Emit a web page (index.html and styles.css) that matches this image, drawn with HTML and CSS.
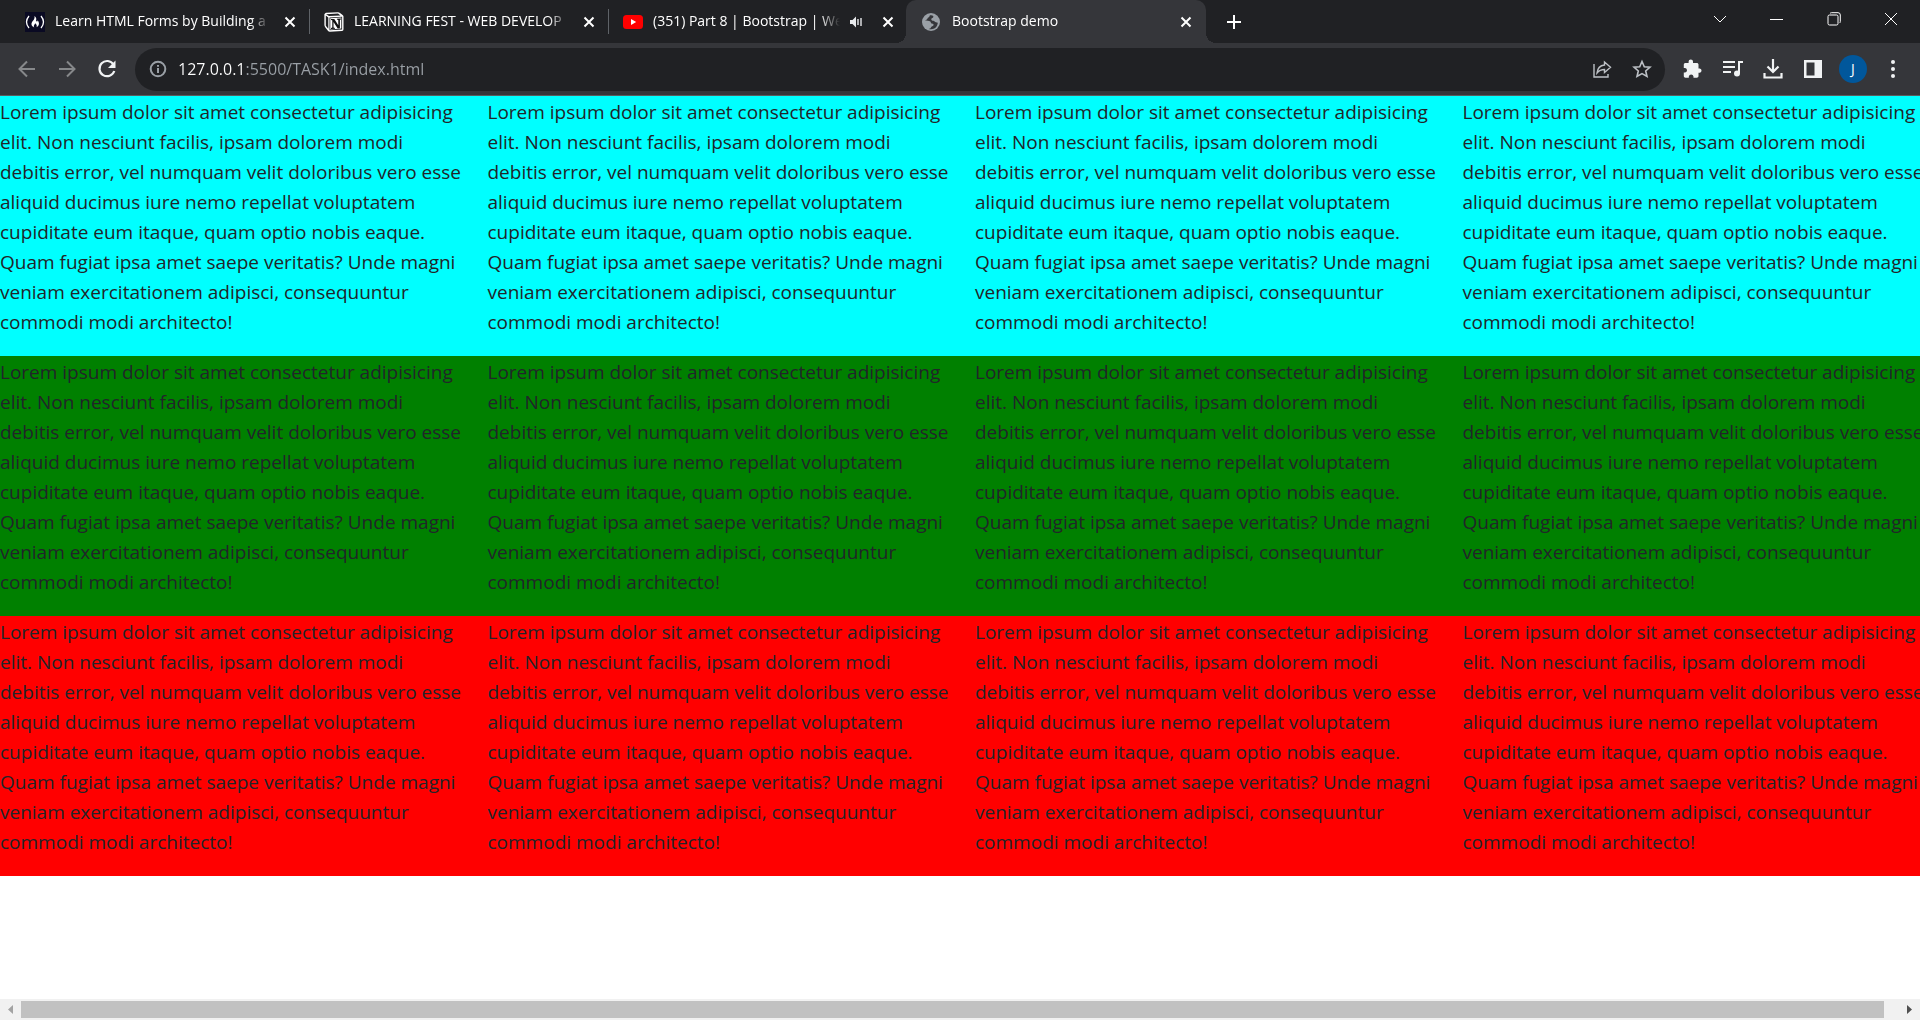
FILE: index.html
```
<!DOCTYPE html>
<html lang="en">
<head>
<meta charset="utf-8">
<title>Bootstrap demo</title>
<link rel="stylesheet" href="styles.css">
</head>
<body>
<header class="browser">
  <div class="tabstrip">
    <div class="tab divided">
      <svg class="favicon" viewBox="0 0 20 20"><rect width="20" height="20" fill="#0a0a23"/><path d="M4 4Q-1 10 4 16M16 4Q21 10 16 16" fill="none" stroke="#fff" stroke-width="1.3"/><path d="M9.500 4c3.500 3 .5 4.500 2.200 5.500.7.300 1-.5.800-1.200 2 2.200 2.200 5.200-.9 7 .6-2-.2-2.900-1.500-4-.2 1.700-2.200 2.200-.8 4.100-3.800-1.400-3.200-4.700-1.300-6.600C9.300 7.400 9.800 6 9.500 4z" fill="#fff"/></svg>
      <span class="label">Learn HTML Forms by Building a</span>
      <button class="close" aria-label="Close tab"><svg viewBox="0 0 12 12"><path d="M1.500 1.500l9 9M10.500 1.500l-9 9"/></svg></button>
    </div>
    <div class="tab divided">
      <svg class="favicon" viewBox="0 0 20 20"><path d="M1.200 1.600Q1 .7 2.200.7L14 .2q1 0 2 .7l2.600 2q.9.700.9 1.600v12.800q0 1.500-1.500 1.600L6 19.700q-1.200.1-1.900-.8L1.200 15.200Q.4 14 .4 13V2z" fill="#fff"/><path d="M2 2.300l12-.7 2.500 1.800L5 4.100zM1.800 3.500L4.300 5.500V16.800L1.800 13.800z" fill="#202124"/><path d="M5.500 5.500l12.600-.7v12.600l-12.600.9z" fill="#202124"/><path d="M6.300 6.200l11-.6v11l-11 .8z" fill="#fff"/><path d="M7 7h3.300l4 6.200V8l-1.400-.4V6.700l4-.2v.9l-1 .4v8.500l-2.200.2-4.200-6.600v5.500l1.500.5v.8l-4 .2v-.8l1.300-.6V8.200L7 8z" fill="#111"/></svg>
      <span class="label">LEARNING FEST - WEB DEVELOP</span>
      <button class="close" aria-label="Close tab"><svg viewBox="0 0 12 12"><path d="M1.500 1.500l9 9M10.500 1.500l-9 9"/></svg></button>
    </div>
    <div class="tab">
      <svg class="favicon" viewBox="0 0 20 20"><rect y="3" width="20" height="14" rx="3.500" fill="#f00"/><path d="M8 7l5.200 3L8 13z" fill="#fff"/></svg>
      <span class="label">(351) Part 8 | Bootstrap | Web</span>
      <button class="audio" aria-label="Mute tab"><svg viewBox="0 0 14 14"><path d="M1 5h2.500L7 1.500v11L3.500 9H1z" fill="#e8eaed"/><path d="M9 4v6M12 3v8" stroke="#e8eaed" stroke-width="1.400"/></svg></button>
      <button class="close" aria-label="Close tab"><svg viewBox="0 0 12 12"><path d="M1.500 1.500l9 9M10.500 1.500l-9 9"/></svg></button>
    </div>
    <div class="tab active">
      <svg class="favicon" viewBox="0 0 20 20"><circle cx="9" cy="10" r="9" fill="#9aa0a6"/><path transform="translate(0 -1)" d="M8 4.200c-1 1-.2 2-1.800 2.300-1 .3-.3 1.600-1.400 2L3 9.600c1.700.1 4 .1 5.300.8.900.5.200 2 1.400 2.200 1.500.2 2.300.7 1.700 2-.5 1-2 .6-2.500 1.800-.3 1-1.200 1.400-2.100 1.500 4.800 1.200 8.700-1.700 9-6.200-1.300-.4-2.600-.1-3.200-1.200-.5-1-2.100-.2-2.900-1.200-.8-.8-.3-2 .6-2.300.9-.2 1.200-.8 1-1.700-.2-.8-1.800-1.100-3.300-1.100z" fill="#35363a"/></svg>
      <span class="label">Bootstrap demo</span>
      <button class="close" aria-label="Close tab"><svg viewBox="0 0 12 12"><path d="M1.500 1.500l9 9M10.500 1.500l-9 9"/></svg></button>
    </div>
    <button class="new-tab" aria-label="New tab"><svg viewBox="0 0 16 16"><path d="M8 1v14M1 8h14"/></svg></button>
    <div class="window-controls">
      <button aria-label="Search tabs"><svg viewBox="0 0 14 14"><path d="M1 4l6 6 6-6"/></svg></button>
      <button aria-label="Minimize"><svg viewBox="0 0 14 14"><path d="M0 7.500h13"/></svg></button>
      <button aria-label="Restore"><svg viewBox="0 0 14 14"><rect x="1" y="3" width="10" height="10" rx="1.500"/><path d="M3 1.500q.6-.8 1.500-.8H11q2.300 0 2.300 2.300v6.500q0 1-.8 1.500"/></svg></button>
      <button aria-label="Close"><svg viewBox="0 0 14 14"><path d="M1 1l12 12M13 1L1 13"/></svg></button>
    </div>
  </div>
  <div class="toolbar">
    <button class="tool muted" aria-label="Back"><svg viewBox="0 0 20 20"><path d="M18 10H3M10 2.500L2.500 10l7.500 7.500"/></svg></button>
    <button class="tool muted" aria-label="Forward"><svg viewBox="0 0 20 20"><path d="M2 10h15M10 2.500l7.500 7.500-7.500 7.500"/></svg></button>
    <button class="tool" aria-label="Reload"><svg viewBox="0 0 20 20"><path d="M16.500 5.500A7.600 7.600 0 1 0 17.300 12" stroke-width="2.200"/><path d="M18.500 1.500v7.500H11z" class="solid"/></svg></button>
    <div class="omnibox">
      <svg class="info" viewBox="0 0 18 18"><circle cx="9" cy="9" r="7.300"/><path d="M9 8v5M9 5v1.700"/></svg>
      <input class="url" type="text" aria-label="Address" value="127.0.0.1:5500/TASK1/index.html">
      <button class="tool soft" aria-label="Share"><svg viewBox="0 0 20 20"><path d="M2 5v13h14v-3M5 14c.5-5 3-7.500 7.500-8V3l6 5.300-6 5.200v-3C9 10.500 7 11.500 5 14z" stroke-width="1.400"/></svg></button>
      <button class="tool soft" aria-label="Bookmark"><svg viewBox="0 0 20 20"><path d="M10 2.500l2.300 5.200 5.700.5-4.300 3.800 1.300 5.500-5-2.900-5 2.900L6.300 12 2 8.200l5.700-.5z" stroke-width="1.600"/></svg></button>
    </div>
    <button class="tool" aria-label="Extensions"><svg viewBox="0 0 20 20"><path class="solid" d="M16.800 9.400h-1.300V5.600c0-1-.8-1.700-1.700-1.700H10V2.600a2.200 2.200 0 0 0-4.400 0v1.300H2.500C1.600 3.900.8 4.600.8 5.600v3.300h1.300a2.400 2.400 0 0 1 0 4.700H.8V17c0 1 .8 1.700 1.700 1.700h3.300v-1.300a2.400 2.400 0 0 1 4.700 0v1.300h3.300c1 0 1.700-.8 1.700-1.700v-3.300h1.300a2.200 2.200 0 0 0 0-4.300z"/></svg></button>
    <button class="tool" aria-label="Media"><svg viewBox="0 0 20 20"><path d="M0 3h12M0 8h12M0 13h8M20 3h-4v11" stroke-width="2"/><circle class="solid" cx="14" cy="14.500" r="3"/></svg></button>
    <button class="tool" aria-label="Downloads"><svg viewBox="0 0 20 20"><path d="M10 0v12M4.500 7.500L10 13l5.500-5.500M1.500 14v4.500h17V14" stroke-width="2.200"/></svg></button>
    <button class="tool" aria-label="Side panel"><svg viewBox="0 0 20 20"><path class="solid" fill-rule="evenodd" d="M1 1h18v18H1zM3.500 3.500v13h8v-13z"/></svg></button>
    <button class="tool" aria-label="Profile"><span class="avatar">J</span></button>
    <button class="tool" aria-label="Menu"><svg viewBox="0 0 20 20"><circle class="solid" cx="10" cy="3" r="2"/><circle class="solid" cx="10" cy="10" r="2"/><circle class="solid" cx="10" cy="17" r="2"/></svg></button>
  </div>
</header>
<main class="page">
  <div class="row cyan">
    <p>Lorem ipsum dolor sit amet consectetur adipisicing<br>elit. Non nesciunt facilis, ipsam dolorem modi<br>debitis error, vel numquam velit doloribus vero esse<br>aliquid ducimus iure nemo repellat voluptatem<br>cupiditate eum itaque, quam optio nobis eaque.<br>Quam fugiat ipsa amet saepe veritatis? Unde magni<br>veniam exercitationem adipisci, consequuntur<br>commodi modi architecto!</p>
    <p>Lorem ipsum dolor sit amet consectetur adipisicing<br>elit. Non nesciunt facilis, ipsam dolorem modi<br>debitis error, vel numquam velit doloribus vero esse<br>aliquid ducimus iure nemo repellat voluptatem<br>cupiditate eum itaque, quam optio nobis eaque.<br>Quam fugiat ipsa amet saepe veritatis? Unde magni<br>veniam exercitationem adipisci, consequuntur<br>commodi modi architecto!</p>
    <p>Lorem ipsum dolor sit amet consectetur adipisicing<br>elit. Non nesciunt facilis, ipsam dolorem modi<br>debitis error, vel numquam velit doloribus vero esse<br>aliquid ducimus iure nemo repellat voluptatem<br>cupiditate eum itaque, quam optio nobis eaque.<br>Quam fugiat ipsa amet saepe veritatis? Unde magni<br>veniam exercitationem adipisci, consequuntur<br>commodi modi architecto!</p>
    <p>Lorem ipsum dolor sit amet consectetur adipisicing<br>elit. Non nesciunt facilis, ipsam dolorem modi<br>debitis error, vel numquam velit doloribus vero esse<br>aliquid ducimus iure nemo repellat voluptatem<br>cupiditate eum itaque, quam optio nobis eaque.<br>Quam fugiat ipsa amet saepe veritatis? Unde magni<br>veniam exercitationem adipisci, consequuntur<br>commodi modi architecto!</p>
  </div>
  <div class="row green">
    <p>Lorem ipsum dolor sit amet consectetur adipisicing<br>elit. Non nesciunt facilis, ipsam dolorem modi<br>debitis error, vel numquam velit doloribus vero esse<br>aliquid ducimus iure nemo repellat voluptatem<br>cupiditate eum itaque, quam optio nobis eaque.<br>Quam fugiat ipsa amet saepe veritatis? Unde magni<br>veniam exercitationem adipisci, consequuntur<br>commodi modi architecto!</p>
    <p>Lorem ipsum dolor sit amet consectetur adipisicing<br>elit. Non nesciunt facilis, ipsam dolorem modi<br>debitis error, vel numquam velit doloribus vero esse<br>aliquid ducimus iure nemo repellat voluptatem<br>cupiditate eum itaque, quam optio nobis eaque.<br>Quam fugiat ipsa amet saepe veritatis? Unde magni<br>veniam exercitationem adipisci, consequuntur<br>commodi modi architecto!</p>
    <p>Lorem ipsum dolor sit amet consectetur adipisicing<br>elit. Non nesciunt facilis, ipsam dolorem modi<br>debitis error, vel numquam velit doloribus vero esse<br>aliquid ducimus iure nemo repellat voluptatem<br>cupiditate eum itaque, quam optio nobis eaque.<br>Quam fugiat ipsa amet saepe veritatis? Unde magni<br>veniam exercitationem adipisci, consequuntur<br>commodi modi architecto!</p>
    <p>Lorem ipsum dolor sit amet consectetur adipisicing<br>elit. Non nesciunt facilis, ipsam dolorem modi<br>debitis error, vel numquam velit doloribus vero esse<br>aliquid ducimus iure nemo repellat voluptatem<br>cupiditate eum itaque, quam optio nobis eaque.<br>Quam fugiat ipsa amet saepe veritatis? Unde magni<br>veniam exercitationem adipisci, consequuntur<br>commodi modi architecto!</p>
  </div>
  <div class="row red">
    <p>Lorem ipsum dolor sit amet consectetur adipisicing<br>elit. Non nesciunt facilis, ipsam dolorem modi<br>debitis error, vel numquam velit doloribus vero esse<br>aliquid ducimus iure nemo repellat voluptatem<br>cupiditate eum itaque, quam optio nobis eaque.<br>Quam fugiat ipsa amet saepe veritatis? Unde magni<br>veniam exercitationem adipisci, consequuntur<br>commodi modi architecto!</p>
    <p>Lorem ipsum dolor sit amet consectetur adipisicing<br>elit. Non nesciunt facilis, ipsam dolorem modi<br>debitis error, vel numquam velit doloribus vero esse<br>aliquid ducimus iure nemo repellat voluptatem<br>cupiditate eum itaque, quam optio nobis eaque.<br>Quam fugiat ipsa amet saepe veritatis? Unde magni<br>veniam exercitationem adipisci, consequuntur<br>commodi modi architecto!</p>
    <p>Lorem ipsum dolor sit amet consectetur adipisicing<br>elit. Non nesciunt facilis, ipsam dolorem modi<br>debitis error, vel numquam velit doloribus vero esse<br>aliquid ducimus iure nemo repellat voluptatem<br>cupiditate eum itaque, quam optio nobis eaque.<br>Quam fugiat ipsa amet saepe veritatis? Unde magni<br>veniam exercitationem adipisci, consequuntur<br>commodi modi architecto!</p>
    <p>Lorem ipsum dolor sit amet consectetur adipisicing<br>elit. Non nesciunt facilis, ipsam dolorem modi<br>debitis error, vel numquam velit doloribus vero esse<br>aliquid ducimus iure nemo repellat voluptatem<br>cupiditate eum itaque, quam optio nobis eaque.<br>Quam fugiat ipsa amet saepe veritatis? Unde magni<br>veniam exercitationem adipisci, consequuntur<br>commodi modi architecto!</p>
  </div>
</main>
<div class="scrollbar">
  <button class="arrow left" aria-label="Scroll left"><svg viewBox="0 0 5 9"><path d="M5 0v9L0 4.500z"/></svg></button>
  <div class="track"><div class="thumb"></div></div>
  <button class="arrow right" aria-label="Scroll right"><svg viewBox="0 0 5 9"><path d="M0 0v9l5-4.500z"/></svg></button>
</div>
</body>
</html>
```
FILE: styles.css
```
* { box-sizing: border-box; }
body {
  margin: 0;
  min-height: 100vh;
  display: flex;
  flex-direction: column;
  background: #fff;
  color: #212529;
  font-family: "Segoe UI", "Open Sans", sans-serif;
  overflow-x: hidden;
}
button {
  border: 0;
  padding: 0;
  background: none;
  color: inherit;
  font: inherit;
  display: flex;
  align-items: center;
  justify-content: center;
}
svg { display: block; flex: none; }

/* tab strip */
.tabstrip {
  display: flex;
  height: 43px;
  padding-left: 9px;
  background: #202124;
}
.tab {
  position: relative;
  display: flex;
  align-items: center;
  width: 299px;
  padding: 0 7px 0 16px;
  color: #fff;
  font-size: 14px;
}
.divided::after {
  content: "";
  position: absolute;
  right: -2px;
  top: 9px;
  width: 1px;
  height: 25px;
  background: #5f6368;
}
.active {
  width: 300px;
  padding: 0 9px 0 16px;
  background: #35363a;
  border-radius: 10px 10px 0 0;
}
.active::before, .active::after {
  content: "";
  position: absolute;
  bottom: 0;
  width: 10px;
  height: 10px;
}
.active::before {
  left: -10px;
  background: radial-gradient(circle at 0 0, #202124 10px, #35363a 10px);
}
.active::after {
  right: -10px;
  background: radial-gradient(circle at 100% 0, #202124 10px, #35363a 10px);
}
.favicon { width: 20px; height: 20px; }
.label {
  flex: 1;
  margin: 0 9px 0 10px;
  padding-bottom: 2px;
  overflow: hidden;
  white-space: nowrap;
  line-height: 20px;
  -webkit-mask-image: linear-gradient(to left, transparent, #000 20px);
  mask-image: linear-gradient(to left, transparent, #000 20px);
}
.close { width: 22px; height: 22px; }
.close svg { width: 12px; height: 12px; stroke: #fff; stroke-width: 2; }
.audio { width: 14px; height: 14px; margin-right: 14px; }
.audio svg { width: 14px; height: 14px; }
.new-tab { width: 32px; height: 43px; margin-left: 12px; }
.new-tab svg { width: 16px; height: 16px; stroke: #fff; stroke-width: 2; }
.window-controls { display: flex; margin: 0 1px 0 auto; }
.window-controls button { width: 57px; height: 37px; }
.window-controls svg { width: 14px; height: 14px; fill: none; stroke: #fff; }

/* toolbar */
.toolbar {
  display: flex;
  align-items: center;
  height: 53px;
  padding: 0 7px;
  background: #35363a;
  border-bottom: 1px solid #5b5c5f;
}
.tool { width: 40px; height: 40px; flex: none; }
.tool svg { width: 20px; height: 20px; fill: none; stroke: #f1f3f4; stroke-width: 2; }
.tool .solid { fill: #f1f3f4; stroke: none; }
.muted svg { stroke: #86888a; }
.soft svg { stroke: #bdc1c6; }
.omnibox {
  display: flex;
  align-items: center;
  flex: 1;
  height: 43px;
  margin: 0 8px;
  padding: 0 3px 0 14px;
  border-radius: 22px;
  background: #202124;
}
.info { width: 18px; height: 18px; fill: none; stroke: #9aa0a6; stroke-width: 2; }
.url {
  flex: 1;
  min-width: 0;
  height: 30px;
  margin-left: 11px;
  padding: 0;
  border: 0;
  outline: 0;
  font: 16px "Segoe UI", "Open Sans", sans-serif;
  color: transparent;
  background: linear-gradient(to right, #fff 68px, #9aa0a6 68px);
  -webkit-background-clip: text;
  background-clip: text;
}
.avatar {
  width: 28px;
  height: 28px;
  border-radius: 50%;
  background: #01579b;
  color: #fff;
  font-size: 14px;
  line-height: 28px;
}

/* page content */
.page { flex: 1; }
.row {
  display: grid;
  grid-template-columns: repeat(4, minmax(0, 1fr));
  gap: 30px;
  padding: 1px 0 19px;
}
.row p {
  margin: 0;
  font-size: 19px;
  font-weight: 370;
  line-height: 30px;
  white-space: nowrap;
}
.cyan { background: #0ff; }
.green { background: #008000; }
.red { background: #f00; }

/* horizontal scrollbar */
.scrollbar { display: flex; height: 21px; background: #f1f1f1; }
.arrow { width: 21px; height: 21px; }
.arrow svg { width: 5px; height: 9px; }
.left { fill: #a3a3a3; }
.right { fill: #505050; }
.track { flex: 1; padding: 2px 15px 2px 0; }
.thumb { height: 17px; background: #c1c1c1; }
```
